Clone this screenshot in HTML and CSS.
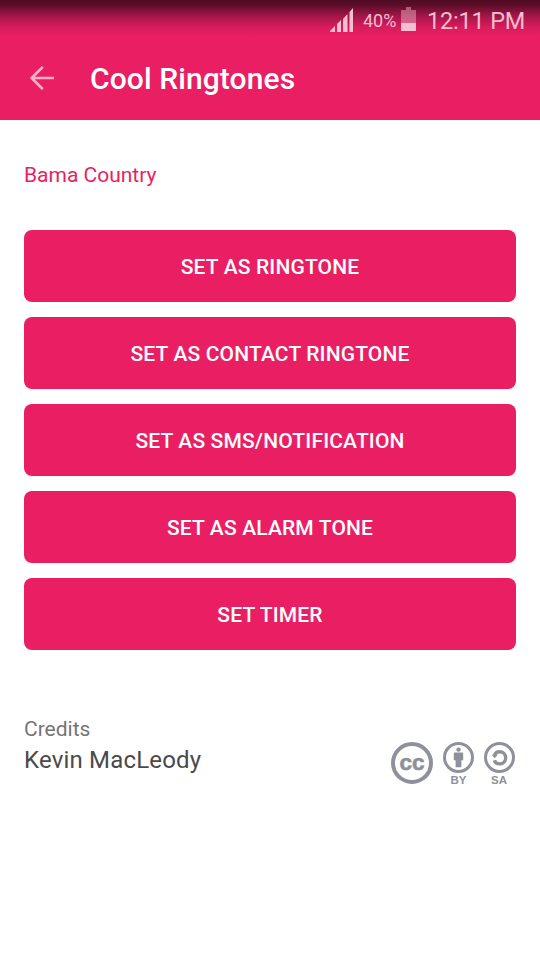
FILE: index.html
```html
<!doctype html>
<html lang="en">
<head>
<meta charset="utf-8">
<title>Cool Ringtones</title>
<link rel="stylesheet" href="styles.css">
</head>

<body>
<header class="top">
	<div class="status">
		<svg class="signal" width="24" height="24" viewBox="0 0 24 24">
			<path d="M0 24v-1l5-5v6zM7 24v-8l4-4v12zM13 24v-13l4.5-5v18zM19.5 24v-20l3.5-4v24z"/>
		</svg>
		<span class="percent">40%</span>
		<svg class="battery" width="15" height="24" viewBox="0 0 15 24">
			<path class="empty" d="M5 0h5v3h5v13h-15v-13h5z"/>
			<path d="M0 16h15v8h-15z"/>
		</svg>
		<span class="time">12:11 PM</span>
	</div>
	<div class="bar">
		<svg class="back" width="24" height="24" viewBox="0 0 24 24">
			<path d="M24 12H1.5M12.8 .9L1.7 12l11.1 11.1"/>
		</svg>
		<h1>Cool Ringtones</h1>
	</div>
</header>

<main class="content">
	<h2>Bama Country</h2>
	<div class="buttons">
		<button>SET AS RINGTONE</button>
		<button>SET AS CONTACT RINGTONE</button>
		<button>SET AS SMS/NOTIFICATION</button>
		<button>SET AS ALARM TONE</button>
		<button>SET TIMER</button>
	</div>
	<div class="credits">
		<div class="author">
			<p class="label">Credits</p>
			<p class="name">Kevin MacLeody</p>
		</div>
		<svg class="license" width="125" height="44" viewBox="0 0 125 44">
			<circle cx="21" cy="21" r="19" stroke-width="4"/>
			<text class="cc" x="21" y="27.5">cc</text>
			<circle cx="67.5" cy="15.5" r="14" stroke-width="3"/>
			<circle class="fill" cx="67.5" cy="7.6" r="2.2"/>
			<path class="fill" d="M63.8 10.4h7.4q1 0 1 1v6.8h-1.8v7h-5.8v-7h-1.8v-6.8q0-1 1-1z"/>
			<text x="67.5" y="41.8">BY</text>
			<circle cx="108.5" cy="15.5" r="14" stroke-width="3"/>
			<path d="M103.6 13C104.2 11 106 9.7 108.5 9.7C112 9.7 114.7 12.2 114.7 15.8S112 21.9 108.5 21.9C105.8 21.9 104 20.5 103.4 18.2" stroke-width="3.4"/>
			<path class="fill" d="M100.6 12.8h6.2l-3.1 3.4z"/>
			<text x="108" y="41.8">SA</text>
		</svg>
	</div>
</main>
</body>
</html>
```

FILE: styles.css
```css
* {margin:0; padding:0; box-sizing:border-box;}
body {background:#fff; font-family:Roboto, sans-serif;}
.top {height:120px; background:#e91e63 linear-gradient(#4d0b22 0, #5e0d29 5px, #a8174a 17px, #d81c5c 27px, #e91e63 37px);}
.status {height:40px; padding:8px 14px 0 0; display:flex; justify-content:flex-end; color:#f4bdd0;}
.status svg {fill:#f4bdd0;}
.signal {margin-right:9px;}
.percent {width:33px; font-size:18px; line-height:26px; margin-right:5px;}
.battery {margin:-1px 11px 0 0;}
.battery .empty {opacity:.45;}
.time {width:99px; font-size:23.5px; line-height:26px; letter-spacing:-.2px; white-space:nowrap;}
.bar {height:80px; padding:0 0 4px 30px; display:flex; align-items:center;}
.back {margin-right:36px; fill:none; stroke:#f8b0c9; stroke-width:2.7;}
h1 {padding-top:2px; font-size:30px; font-weight:500; line-height:36px; letter-spacing:.1px; color:#fff;}
.content {padding:42px 24px 0;}
h2 {font-size:21px; font-weight:400; line-height:26px; color:#e91e63;}
.buttons {margin-top:42px; display:flex; flex-direction:column; gap:15px;}
button {height:72px; padding-top:2px; border:0; border-radius:8px; background:#e91e63; color:#fff; font:500 21px/26px Roboto, sans-serif; letter-spacing:.15px;}
.credits {margin-top:66px; display:flex; justify-content:space-between;}
.label {font-size:21px; line-height:26px; color:#757575;}
.name {font-size:24px; line-height:30px; margin-top:3px; letter-spacing:.18px; color:#4a4a4a;}
.license {margin-top:26px; fill:none; stroke:#8e909b;}
.license .fill {fill:#8e909b; stroke:none;}
.license text {font:bold 11.5px "Liberation Sans", sans-serif; fill:#8e909b; stroke:none; text-anchor:middle;}
.license .cc {font-size:22.5px; stroke:#8e909b; stroke-width:.6;}
```
